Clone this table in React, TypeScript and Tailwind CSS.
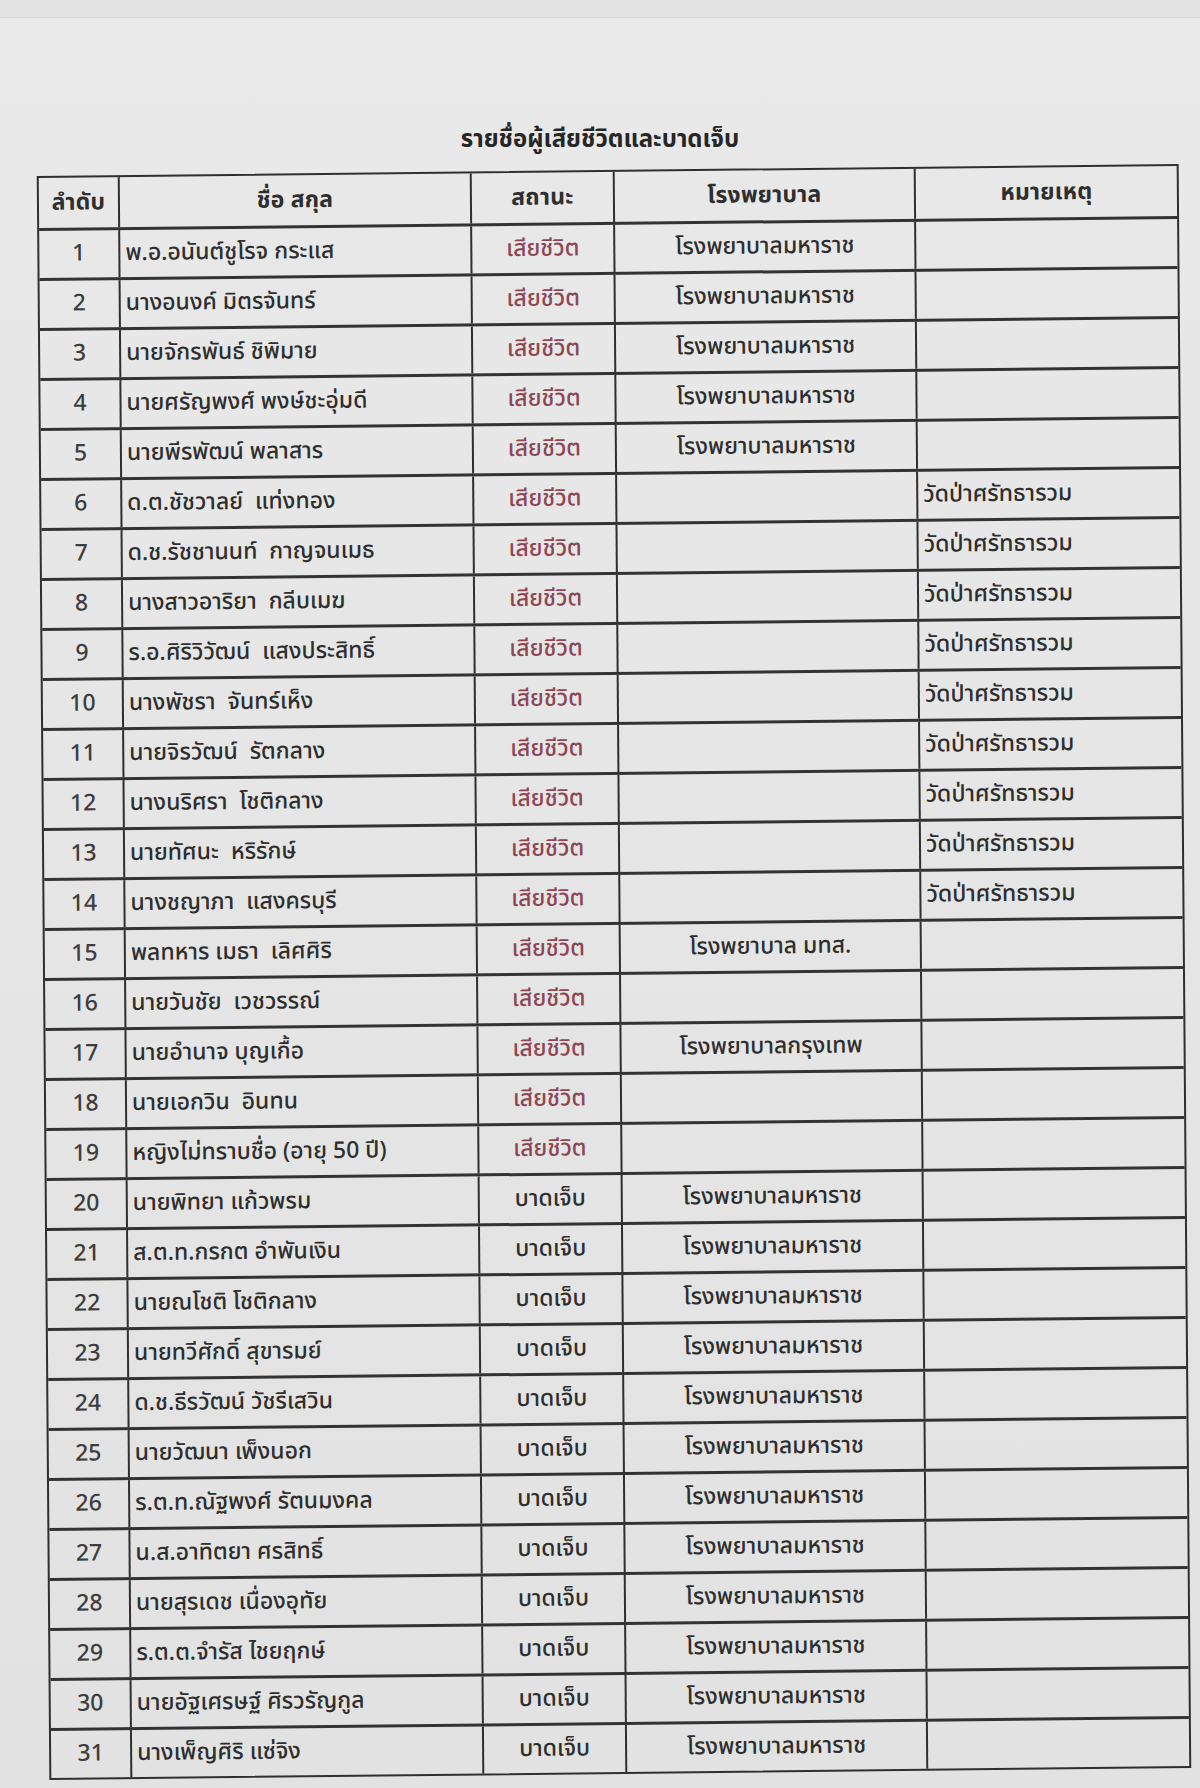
type Row = {
  no: number;
  name: string;
  status: 'dead' | 'hurt';
  hospital?: string;
  note?: string;
};

const MAHARAT = 'โรงพยาบาลมหาราช';
const WAT = 'วัดป่าศรัทธารวม';

const rows: Row[] = [
  { no: 1, name: 'พ.อ.อนันต์ชูโรจ กระแส', status: 'dead', hospital: MAHARAT },
  { no: 2, name: 'นางอนงค์ มิตรจันทร์', status: 'dead', hospital: MAHARAT },
  { no: 3, name: 'นายจักรพันธ์ ชิพิมาย', status: 'dead', hospital: MAHARAT },
  { no: 4, name: 'นายศรัญพงศ์ พงษ์ชะอุ่มดี', status: 'dead', hospital: MAHARAT },
  { no: 5, name: 'นายพีรพัฒน์ พลาสาร', status: 'dead', hospital: MAHARAT },
  { no: 6, name: 'ด.ต.ชัชวาลย์  แท่งทอง', status: 'dead', note: WAT },
  { no: 7, name: 'ด.ช.รัชชานนท์  กาญจนเมธ', status: 'dead', note: WAT },
  { no: 8, name: 'นางสาวอาริยา  กลีบเมฆ', status: 'dead', note: WAT },
  { no: 9, name: 'ร.อ.ศิริวิวัฒน์  แสงประสิทธิ์', status: 'dead', note: WAT },
  { no: 10, name: 'นางพัชรา  จันทร์เห็ง', status: 'dead', note: WAT },
  { no: 11, name: 'นายจิรวัฒน์  รัตกลาง', status: 'dead', note: WAT },
  { no: 12, name: 'นางนริศรา  โชติกลาง', status: 'dead', note: WAT },
  { no: 13, name: 'นายทัศนะ  หริรักษ์', status: 'dead', note: WAT },
  { no: 14, name: 'นางชญาภา  แสงครบุรี', status: 'dead', note: WAT },
  { no: 15, name: 'พลทหาร เมธา  เลิศศิริ', status: 'dead', hospital: 'โรงพยาบาล มทส.' },
  { no: 16, name: 'นายวันชัย  เวชวรรณ์', status: 'dead' },
  { no: 17, name: 'นายอำนาจ บุญเกื้อ', status: 'dead', hospital: 'โรงพยาบาลกรุงเทพ' },
  { no: 18, name: 'นายเอกวิน  อินทน', status: 'dead' },
  { no: 19, name: 'หญิงไม่ทราบชื่อ (อายุ 50 ปี)', status: 'dead' },
  { no: 20, name: 'นายพิทยา แก้วพรม', status: 'hurt', hospital: MAHARAT },
  { no: 21, name: 'ส.ต.ท.กรกต อำพันเงิน', status: 'hurt', hospital: MAHARAT },
  { no: 22, name: 'นายณโชติ โชติกลาง', status: 'hurt', hospital: MAHARAT },
  { no: 23, name: 'นายทวีศักดิ์ สุขารมย์', status: 'hurt', hospital: MAHARAT },
  { no: 24, name: 'ด.ช.ธีรวัฒน์ วัชรีเสวิน', status: 'hurt', hospital: MAHARAT },
  { no: 25, name: 'นายวัฒนา เพ็งนอก', status: 'hurt', hospital: MAHARAT },
  { no: 26, name: 'ร.ต.ท.ณัฐพงศ์ รัตนมงคล', status: 'hurt', hospital: MAHARAT },
  { no: 27, name: 'น.ส.อาทิตยา ศรสิทธิ์', status: 'hurt', hospital: MAHARAT },
  { no: 28, name: 'นายสุรเดช เนื่องอุทัย', status: 'hurt', hospital: MAHARAT },
  { no: 29, name: 'ร.ต.ต.จำรัส ไชยฤกษ์', status: 'hurt', hospital: MAHARAT },
  { no: 30, name: 'นายอัฐเศรษฐ์ ศิรวรัญกูล', status: 'hurt', hospital: MAHARAT },
  { no: 31, name: 'นางเพ็ญศิริ แซ่จิง', status: 'hurt', hospital: MAHARAT },
];

const grid = 'grid grid-cols-[79px_352px_143px_301px_263px] h-[50px]';
const cell = 'flex items-center border-l-2 border-[#2f2f2f]';

export default function App() {
  return (
    <div
      className="w-[1200px] h-[1788px] overflow-hidden bg-linear-to-b from-[#e9e9e9] to-[#e2e2e2] text-[#2e2e2e]"
      style={{ fontFamily: '"Noto Sans Thai", Tahoma, "Noto Sans", "DejaVu Sans", sans-serif' }}
    >
      <div className="h-[18px] border-b border-[#d8d8d8] bg-[#e3e3e3]" />

      <h1 className="mt-[106px] text-center text-[24px] leading-[32px] font-bold text-[#262626]">
        รายชื่อผู้เสียชีวิตและบาดเจ็บ
      </h1>

      <div className="ml-[43px] mt-[14px] w-[1142px] border-2 border-[#2f2f2f] skew-x-[0.45deg] skew-y-[-0.6deg]">
        <div className={`${grid} text-[23px] font-bold tracking-[0.2px]`}>
          <div className="flex items-center justify-center">ลำดับ</div>
          <div className={`${cell} justify-center`}>ชื่อ สกุล</div>
          <div className={`${cell} justify-center`}>สถานะ</div>
          <div className={`${cell} justify-center`}>โรงพยาบาล</div>
          <div className={`${cell} justify-center`}>หมายเหตุ</div>
        </div>

        {rows.map((r) => (
          <div key={r.no} className={`${grid} border-t-[3px] border-[#333333] text-[23px] font-medium`}>
            <div className="flex items-center justify-center text-[#3d3d3d]">{r.no}</div>
            <div className={`${cell} pl-[5px] whitespace-pre`}>{r.name}</div>
            <div className={`${cell} justify-center ${r.status === 'dead' ? 'text-[#8e4654]' : 'text-[#2e2e2e]'}`}>
              {r.status === 'dead' ? 'เสียชีวิต' : 'บาดเจ็บ'}
            </div>
            <div className={`${cell} justify-center`}>{r.hospital}</div>
            <div className={`${cell} pl-[5px]`}>{r.note}</div>
          </div>
        ))}
      </div>
    </div>
  );
}
